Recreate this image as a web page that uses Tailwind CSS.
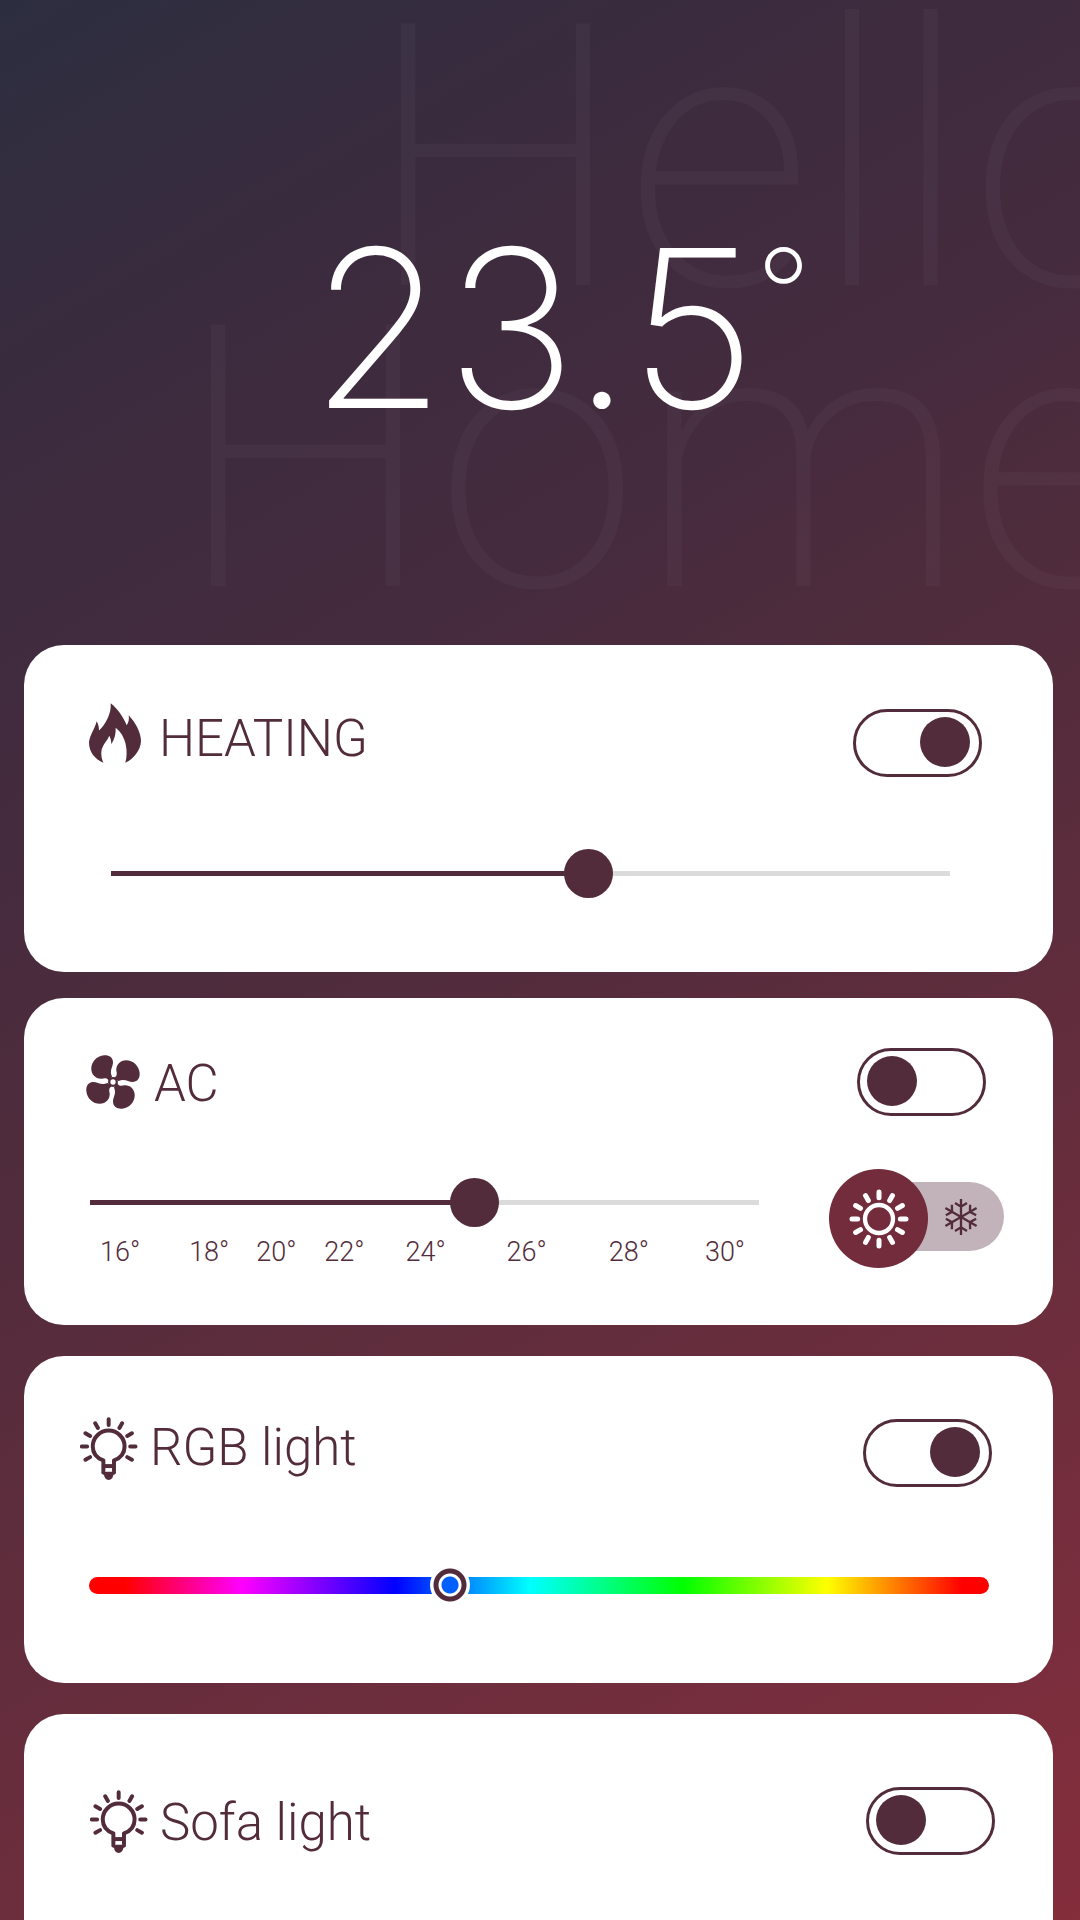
<!DOCTYPE html>
<html lang="en">
<head>
<meta charset="utf-8">
<meta name="viewport" content="width=device-width, initial-scale=1">
<title>Home climate</title>
<script src="https://cdn.jsdelivr.net/npm/@tailwindcss/browser@4"></script>
</head>
<body class="font-[Roboto,sans-serif] text-[#532c3c]">
<svg class="hidden" aria-hidden="true">
  <symbol id="bulb" viewBox="61 77 174 190">
    <g fill="none" stroke="#532c3c" stroke-linecap="round" stroke-linejoin="round">
      <path stroke-width="12" d="M147 101V84M179.500 110l8-14M203 134l14-8M212 166h16M203 198l14 8M114.500 110l-8-14M91 134l-14-8M82 166H66M91 198l-14 8"/>
      <path stroke-width="12" d="M131 240V208C112 201 99 186 99 166a48 48 0 0 1 96 0c0 20-13 35-32 42V240"/>
      <path stroke-width="12" stroke-linecap="butt" d="M130 225h34"/>
    </g>
    <path fill="#532c3c" d="M125 242h44v5q-2 4-8 5-2 14-14 15-12-1-14-15-6-1-8-5z"/>
  </symbol>
</svg>
<main class="flex min-h-screen flex-col overflow-hidden bg-[linear-gradient(150deg,#2c2e40_0%,#3b2b3e_17%,#452b3e_34%,#4f2c3c_46%,#7c2e3d_91%,#842d3b_100%)] pr-[27px] pl-6">
  <header class="relative h-[645px] pt-[218px] pl-[286px]">
    <p class="absolute top-[9px] left-[152px] text-[368px] leading-[301px] font-extralight whitespace-nowrap text-white/[0.03]" aria-hidden="true"><span class="block pl-[190px]">Hello</span><span class="block">Home</span></p>
    <h1 class="relative flex items-start font-[Inter,sans-serif] text-[220px] leading-none font-extralight text-white">23.5<span class="mt-[14px] text-[120px] leading-none font-extralight">°</span></h1>
  </header>

  <section class="min-h-[327px] rounded-[40px] bg-white pt-14">
    <div class="flex items-start justify-between pr-[71px] pl-[65px]">
      <h2 class="flex h-16 items-center gap-[18px] text-[51px]">
        <svg class="h-[60px] w-[52px]" viewBox="87 69 156 179" fill="#532c3c" aria-hidden="true"><path d="M152 69C172 84 190 110 200 135C206 127 208 116 206 105C225 125 243 155 243 183C242 210 220 237 196 248C206 215 198 165 167 143C168 160 164 178 154 192C154 183 152 175 148 167C142 182 126 195 124 215C123 228 126 238 130 248C105 238 87 215 87 188C88 165 104 148 110 123C115 132 117 140 117 151C135 135 155 100 152 69Z"/></svg>
        <label for="heating" class="pt-3 leading-[60px] font-light">HEATING</label>
      </h2>
      <input id="heating" type="checkbox" role="switch" checked class="mt-2 flex h-[68px] w-[129px] appearance-none rounded-full border-3 border-[#532c3c] px-[9px] pt-[5px] before:size-[50px] before:rounded-full before:bg-[#532c3c] checked:justify-end">
    </div>
    <div class="mt-18 pr-[103px] pl-[87px]">
      <input type="range" aria-label="Heating temperature" min="0" max="41" step="0.5" value="23.5" class="block h-[49px] w-full appearance-none bg-[linear-gradient(to_right,#532c3c_57%,#dbdbdb_57%)] bg-[length:100%_5px] bg-center bg-no-repeat [&::-webkit-slider-thumb]:size-[49px] [&::-webkit-slider-thumb]:appearance-none [&::-webkit-slider-thumb]:rounded-full [&::-webkit-slider-thumb]:bg-[#532c3c]">
    </div>
  </section>

  <section class="mt-[26px] min-h-[327px] rounded-[40px] bg-white pt-[50px]">
    <div class="flex items-center justify-between pr-[67px] pl-[62px]">
      <h2 class="flex h-16 items-center gap-[14px] text-[51px]">
        <svg class="size-[54px]" viewBox="-82 -82 164 164" fill="#532c3c" aria-hidden="true">
          <g id="blade"><path d="M-9 -7L-3 -17C-12 -35 1 -48 0 -61C-1 -76 -13 -82 -27 -81C-50 -79 -66 -60 -66 -40C-66 -22 -52 -9 -35 -10C-26 -12 -20 -13 -15 -7L-12 -3Z"/></g>
          <use href="#blade" transform="rotate(90)"/><use href="#blade" transform="rotate(180)"/><use href="#blade" transform="rotate(270)"/>
          <circle r="11.500" fill="none" stroke="#532c3c" stroke-width="7"/>
        </svg>
        <label for="ac" class="pt-1 leading-[60px] font-light">AC</label>
      </h2>
      <input id="ac" type="checkbox" role="switch" class="flex h-[68px] w-[129px] appearance-none rounded-full border-3 border-[#532c3c] px-[7px] pt-[5px] before:size-[50px] before:rounded-full before:bg-[#532c3c] checked:justify-end">
    </div>
    <div class="mt-[53px] flex gap-[70px] pr-[49px] pl-[66px]">
      <div class="flex-1 pt-[9px]">
        <input type="range" aria-label="AC temperature" min="15" max="31" step="0.1" value="24.3" class="block h-[49px] w-full appearance-none bg-[linear-gradient(to_right,#532c3c_58%,#dbdbdb_58%)] bg-[length:100%_5px] bg-center bg-no-repeat [&::-webkit-slider-thumb]:size-[49px] [&::-webkit-slider-thumb]:appearance-none [&::-webkit-slider-thumb]:rounded-full [&::-webkit-slider-thumb]:bg-[#532c3c]">
        <div class="mt-2 grid grid-cols-[89fr_67fr_68fr_81fr_101fr_102fr_96fr_54fr] pl-[10px] text-[27px] leading-[34px] font-light">
          <span>16°</span><span>18°</span><span>20°</span><span>22°</span><span>24°</span><span>26°</span><span>28°</span><span>30°</span>
        </div>
      </div>
      <div role="radiogroup" aria-label="AC mode" class="flex items-start">
        <label class="relative flex size-[99px] items-center justify-center rounded-full bg-[#722c3c]">
          <input type="radio" name="mode" checked aria-label="Heat" class="absolute size-full appearance-none">
          <svg class="size-[60px]" viewBox="-90 -90 180 180" fill="none" stroke="#fff" aria-hidden="true">
            <circle r="42" stroke-width="13"/>
            <g stroke-width="15" stroke-linecap="round">
              <path id="rays" d="M0 -64V-81M64 0H81M0 64V81M-64 0H-81"/>
              <use href="#rays" transform="rotate(30)"/><use href="#rays" transform="rotate(60)"/>
            </g>
          </svg>
        </label>
        <label class="mt-[13px] -ml-[50px] flex h-[69px] w-[126px] items-center justify-end rounded-r-full bg-[#c2b3ba] pr-[25px]">
          <input type="radio" name="mode" aria-label="Cool" class="size-0 appearance-none">
          <svg class="size-9" viewBox="-54 -54 108 108" fill="none" stroke="#532c3c" stroke-width="7" aria-hidden="true">
            <path id="arm" d="M0 54V-54M-18 -42L0 -31L18 -42M-18 42L0 31L18 42"/>
            <use href="#arm" transform="rotate(60)"/><use href="#arm" transform="rotate(120)"/>
          </svg>
        </label>
      </div>
    </div>
  </section>

  <section class="mt-[31px] min-h-[327px] rounded-[40px] bg-white pt-[60px]">
    <div class="flex items-start justify-between pr-[61px] pl-14">
      <h2 class="flex h-16 items-center gap-3 text-[51px]">
        <svg class="h-[63px] w-[58px]" aria-hidden="true"><use href="#bulb"/></svg>
        <label for="rgb" class="leading-[60px] font-light">RGB light</label>
      </h2>
      <input id="rgb" type="checkbox" role="switch" checked class="mt-[3px] flex h-[68px] w-[129px] appearance-none rounded-full border-3 border-[#532c3c] px-[9px] pt-[5px] before:size-[50px] before:rounded-full before:bg-[#532c3c] checked:justify-end">
    </div>
    <div class="mt-[78px] pr-16 pl-[65px]">
      <div class="flex h-10 items-center">
        <input type="range" aria-label="Light colour" min="0" max="100" step="0.1" value="39.7" class="block h-[17px] w-full appearance-none rounded-full bg-[linear-gradient(to_right,#f00_4%,#f0f_17%,#00f_34%,#0ff_49%,#0f0_66%,#ff0_82%,#f00_97%)] [&::-webkit-slider-thumb]:size-10 [&::-webkit-slider-thumb]:appearance-none [&::-webkit-slider-thumb]:rounded-full [&::-webkit-slider-thumb]:bg-[radial-gradient(circle,#0060ff_8px,#fff_9px,#fff_11px,#532c3c_12px,#532c3c_16px,#fff_17px)]">
      </div>
    </div>
  </section>

  <section class="mt-[31px] grow rounded-t-[40px] bg-white pt-[73px]">
    <div class="flex items-center justify-between pr-[58px] pl-[66px]">
      <h2 class="flex h-16 items-center gap-3 text-[51px]">
        <svg class="h-[63px] w-[58px]" aria-hidden="true"><use href="#bulb"/></svg>
        <label for="sofa" class="pt-1 leading-[60px] font-light">Sofa light</label>
      </h2>
      <input id="sofa" type="checkbox" role="switch" class="flex h-[68px] w-[129px] appearance-none rounded-full border-3 border-[#532c3c] px-[7px] pt-[5px] before:size-[50px] before:rounded-full before:bg-[#532c3c] checked:justify-end">
    </div>
  </section>
</main>
</body>
</html>
